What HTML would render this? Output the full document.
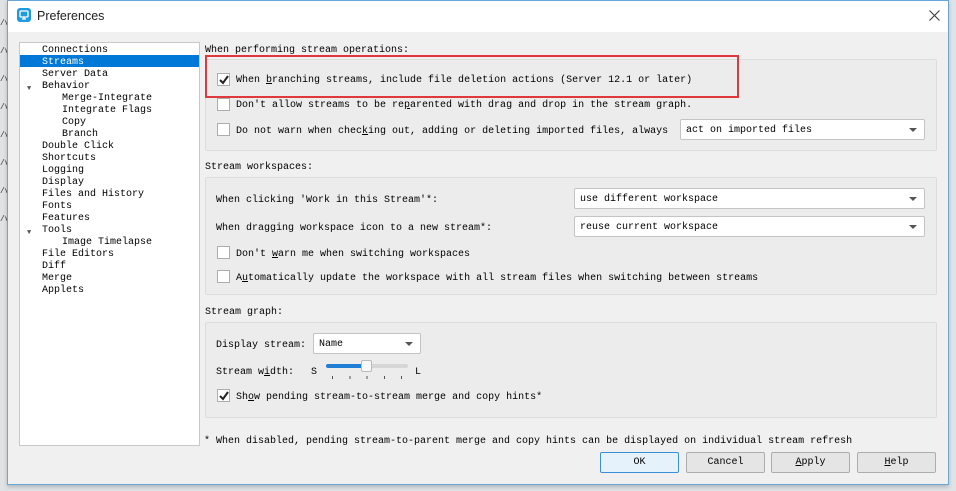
<!DOCTYPE html>
<html><head><meta charset="utf-8"><style>
*{box-sizing:border-box;margin:0;padding:0}
body{width:956px;height:491px;background:#dfe3e6;position:relative;overflow:hidden;font-family:"Liberation Mono","Noto Sans CJK SC",monospace;font-size:10px;color:#000}
.a{position:absolute;white-space:pre;line-height:12px;margin-top:2px}
#win{position:absolute;left:7px;top:0;width:942px;height:485px;background:#f0f0f0;border:1px solid #6aa6d6;box-shadow:0 2px 4px rgba(0,0,0,.2)}
#title{position:absolute;left:0;top:0;width:940px;height:31px;background:#fff}
.tree{position:absolute;left:19px;top:42px;width:181px;height:404px;background:#fff;border:1px solid #c8c8c8}
.grp{position:absolute;border:1px solid #dcdcdc;border-radius:2px;background:#ececec}
.cb{position:absolute;width:13px;height:13px;border:1px solid #adadad;background:#fff}
.dd{position:absolute;height:21px;border:1px solid #c4c4c4;border-radius:2px;background:#fff;padding:5px 0 0 5px;white-space:pre;line-height:12px}
.dd:after{content:"";position:absolute;right:7px;top:8px;border:4px solid transparent;border-top:4px solid #555;border-bottom:0}
.btn{position:absolute;top:452px;height:21px;width:79px;border:1px solid #adadad;border-radius:2px;background:#e5e5e5;text-align:center;line-height:20px}
u{text-decoration:underline}
</style></head><body>
<div class="a" style="left:0;top:8px;color:#333;font-size:8px;line-height:28px">/v
/v
/v
/v
/v
/v
/v
/v</div>
<div id="win"><div id="title"></div></div>
<svg style="position:absolute;left:17px;top:8px" width="14" height="14"><rect x="0" y="0" width="14" height="14" rx="3" fill="#1e9be0"/><rect x="3" y="3" width="8" height="6" rx="1" fill="none" stroke="#fff" stroke-width="1.3"/><path d="M5 11h4M7 9v2" stroke="#fff" stroke-width="1.2"/></svg>
<div class="a" style="left:37px;top:7px;font-family:'Liberation Sans',sans-serif;font-size:12.5px;line-height:15px;color:#222">Preferences</div>
<svg style="position:absolute;left:929px;top:10px" width="11" height="11"><path d="M0.5 0.5L10.5 10.5M10.5 0.5L0.5 10.5" stroke="#333" stroke-width="1"/></svg>

<div class="tree"></div>
<div style="position:absolute;left:20px;top:55px;width:179px;height:12px;background:#0078d7"></div>
<div class="a" style="left:42px;top:43px">Connections</div>
<div class="a" style="left:42px;top:55px;color:#fff">Streams</div>
<div class="a" style="left:42px;top:67px">Server Data
Behavior</div>
<div class="a" style="left:62px;top:91px">Merge-Integrate
Integrate Flags
Copy
Branch</div>
<div class="a" style="left:42px;top:139px">Double Click
Shortcuts
Logging
Display
Files and History
Fonts
Features
Tools</div>
<div class="a" style="left:62px;top:235px">Image Timelapse</div>
<div class="a" style="left:42px;top:247px">File Editors
Diff
Merge
Applets</div>
<div class="a" style="left:27px;top:81px;font-size:7px;color:#555">▼</div>
<div class="a" style="left:27px;top:225px;font-size:7px;color:#555">▼</div>

<div class="a" style="left:205px;top:43px">When performing stream operations:</div>
<div class="grp" style="left:205px;top:59px;width:732px;height:92px"></div>
<div class="cb" style="left:217px;top:73px"></div>
<svg style="position:absolute;left:219px;top:75px" width="10" height="10"><path d="M1 5l3 3l5-7" stroke="#222" stroke-width="2" fill="none"/></svg>
<div class="a" style="left:236px;top:73px">When <u>b</u>ranching streams, include file deletion actions (Server 12.1 or later)</div>
<div style="position:absolute;left:205px;top:55px;width:534px;height:43px;border:2px solid #e0383c"></div>
<div class="cb" style="left:217px;top:98px"></div>
<div class="a" style="left:236px;top:98px">Don't allow streams to be re<u>p</u>arented with drag and drop in the stream graph.</div>
<div class="cb" style="left:217px;top:123px"></div>
<div class="a" style="left:236px;top:124px">Do not warn when chec<u>k</u>ing out, adding or deleting imported files, always</div>
<div class="dd" style="left:680px;top:119px;width:245px">act on imported files</div>

<div class="a" style="left:205px;top:160px">Stream workspaces:</div>
<div class="grp" style="left:205px;top:177px;width:732px;height:118px"></div>
<div class="a" style="left:216px;top:193px">When clicking 'Work in this Stream'*:</div>
<div class="dd" style="left:574px;top:188px;width:351px">use different workspace</div>
<div class="a" style="left:216px;top:221px">When dragging workspace icon to a new stream*:</div>
<div class="dd" style="left:574px;top:216px;width:351px">reuse current workspace</div>
<div class="cb" style="left:217px;top:246px"></div>
<div class="a" style="left:236px;top:247px">Don't <u>w</u>arn me when switching workspaces</div>
<div class="cb" style="left:217px;top:270px"></div>
<div class="a" style="left:236px;top:271px">A<u>u</u>tomatically update the workspace with all stream files when switching between streams</div>

<div class="a" style="left:205px;top:305px">Stream graph:</div>
<div class="grp" style="left:205px;top:322px;width:732px;height:96px"></div>
<div class="a" style="left:216px;top:338px">Display stream:</div>
<div class="dd" style="left:313px;top:333px;width:108px">Name</div>
<div class="a" style="left:216px;top:365px">Stream w<u>i</u>dth:</div>
<div class="a" style="left:311px;top:365px">S</div>
<div class="a" style="left:415px;top:365px">L</div>
<div style="position:absolute;left:326px;top:364px;width:82px;height:4px;background:#d6d6d6;border-radius:2px"></div>
<div style="position:absolute;left:326px;top:364px;width:40px;height:4px;background:#1f7fd6;border-radius:2px"></div>
<div style="position:absolute;left:361px;top:360px;width:11px;height:12px;background:#f8f8f8;border:1px solid #bbb;border-radius:2px"></div>
<div style="position:absolute;left:332px;top:376px;width:70px;height:3px;background:repeating-linear-gradient(90deg,#555 0 1px,transparent 1px 17.3px)"></div>
<div class="cb" style="left:217px;top:389px"></div>
<svg style="position:absolute;left:219px;top:391px" width="10" height="10"><path d="M1 5l3 3l5-7" stroke="#222" stroke-width="2" fill="none"/></svg>
<div class="a" style="left:236px;top:390px">Sh<u>o</u>w pending stream-to-stream merge and copy hints*</div>

<div class="a" style="left:204px;top:434px">* When disabled, pending stream-to-parent merge and copy hints can be displayed on individual stream refresh</div>
<div class="btn" style="left:600px;border-color:#3b8fd9;background:#e5f1fb">OK</div>
<div class="btn" style="left:686px">Cancel</div>
<div class="btn" style="left:771px"><u>A</u>pply</div>
<div class="btn" style="left:857px"><u>H</u>elp</div>
</body></html>
